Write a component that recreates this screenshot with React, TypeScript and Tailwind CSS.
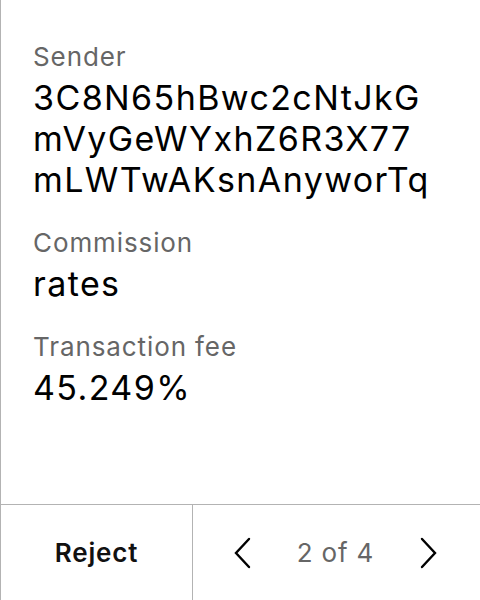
import React from "react";

const fields = [
  { label: "Sender", lines: ["3C8N65hBwc2cNtJkG", "mVyGeWYxhZ6R3X77", "mLWTwAKsnAnyworTq"] },
  { label: "Commission", lines: ["rates"] },
  { label: "Transaction fee", lines: ["45.249%"] },
];

const App: React.FC = () => {
  return (
    <div
      className="w-[480px] h-[600px] bg-white flex flex-col border-l border-[#b3b3b3]"
      style={{ fontFamily: "Inter, 'Noto Sans', sans-serif" }}
    >
      {/* Details */}
      <div className="flex-1 pl-8 pr-6 pt-[37px] flex flex-col gap-[23px]">
        {fields.map((f) => (
          <div key={f.label} className="flex flex-col">
            <span className="text-[26px] leading-[40px] tracking-[0.9px] text-[#666666]">{f.label}</span>
            {f.lines.map((l) => (
              <span key={l} className="text-[34px] leading-[41px] tracking-[1.4px] text-black">
                {l}
              </span>
            ))}
          </div>
        ))}
      </div>

      {/* Footer */}
      <div className="h-[96px] shrink-0 flex border-t border-[#b3b3b3]">
        <button className="w-[192px] border-r border-[#b3b3b3] flex items-center justify-center text-[26px] tracking-[0.8px] font-semibold text-[#111]">
          Reject
        </button>
        <div className="flex-1 flex items-center justify-between pl-[40px] pr-[42px]">
          <svg width="20" height="32" viewBox="0 0 20 32" fill="none">
            <polyline points="16,2 3,16 16,30" stroke="#000" strokeWidth="2.4" strokeLinecap="round" strokeLinejoin="miter" />
          </svg>
          <span className="text-[26px] tracking-[0.8px] text-[#666666]">2 of 4</span>
          <svg width="20" height="32" viewBox="0 0 20 32" fill="none">
            <polyline points="4,2 17,16 4,30" stroke="#000" strokeWidth="2.4" strokeLinecap="round" strokeLinejoin="miter" />
          </svg>
        </div>
      </div>
    </div>
  );
};

export default App;
